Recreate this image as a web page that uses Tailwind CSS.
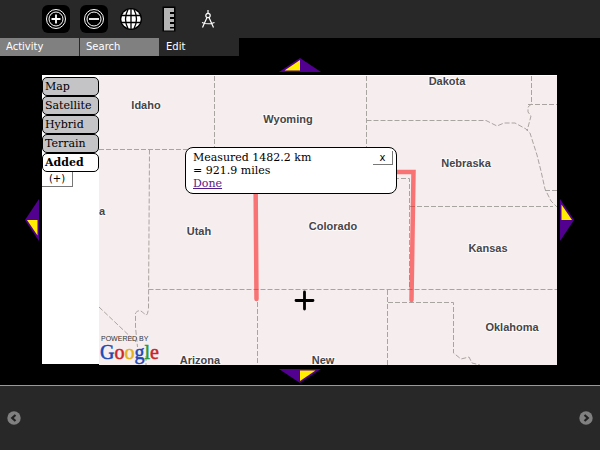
<!DOCTYPE html>
<html lang="en">
<head>
  <meta charset="UTF-8" />
  <meta name="viewport" content="width=device-width, initial-scale=1.0" />
  <title>Map Activity</title>
  <script src="https://cdn.jsdelivr.net/npm/@tailwindcss/browser@4"></script>
</head>

<body class="min-h-screen flex flex-col bg-black overflow-hidden font-['DejaVu_Sans',sans-serif]">

  <!-- Toolbar -->
  <header class="bg-[#282828]">
    <div class="flex items-center gap-2.5 h-[38px] pl-[42px]">
      <button type="button" aria-label="Zoom in" class="w-7 h-7 rounded-md bg-black">
        <svg viewBox="0 0 28 28" fill="none" stroke="#fff">
          <circle cx="14" cy="14" r="9.5" stroke-width="1" />
          <circle cx="14" cy="14" r="7" stroke-width="1" />
          <path d="M9.5 14h9M14 9.5v9" stroke-width="1.8" />
        </svg>
      </button>
      <button type="button" aria-label="Zoom out" class="w-7 h-7 rounded-md bg-black">
        <svg viewBox="0 0 28 28" fill="none" stroke="#fff">
          <circle cx="14" cy="14" r="9.5" stroke-width="1" />
          <circle cx="14" cy="14" r="7" stroke-width="1" />
          <path d="M9 14h10" stroke-width="1.8" />
        </svg>
      </button>
      <button type="button" aria-label="Street view" class="w-7 h-7">
        <svg viewBox="0 0 28 28">
          <circle cx="13" cy="14" r="11" fill="#000" />
          <circle cx="13" cy="14" r="9.7" fill="#fff" />
          <path d="M13 4v20M3 10.5h20M3 17.500h20M10 4.500q-5 9.500 0 19M16 4.500q5 9.500 0 19" fill="none" stroke="#000" stroke-width="1.300" />
        </svg>
      </button>
      <button type="button" aria-label="Measure" class="w-7 h-7">
        <svg viewBox="0 0 28 28">
          <path d="M6.500 1.500h13v25h-13z" fill="#000" />
          <path d="M8 3h10v4h-4v2h4v3h-4v2h4v3h-4v2h4v3h-4v1.500h4v2H8z" fill="#b4b4b4" />
        </svg>
      </button>
      <button type="button" aria-label="Draw" class="w-7 h-7">
        <svg viewBox="0 0 28 28" fill="none" stroke="#fff" stroke-width="1.200">
          <circle cx="14" cy="10.500" r="2.200" />
          <path d="M14 5v3.500M13 12.500L8.500 22.500M15 12.500L19.500 22.500M8 17.500q6 2.500 12.500 0" />
        </svg>
      </button>
    </div>
    <nav class="flex h-[18px] bg-black text-[10px] leading-[17px] text-white">
      <a href="#activity" class="w-20 pl-1.5 bg-[#808080] border-r border-[#282828]">Activity</a>
      <a href="#search" class="w-20 pl-1.5 bg-[#808080] border-r border-[#282828]">Search</a>
      <a href="#edit" class="w-20 pl-1.5 bg-[#282828] border-r border-black">Edit</a>
    </nav>
  </header>

  <!-- Map with pan arrows on each side -->
  <main class="flex-1 grid grid-cols-[42px_1fr_43px] grid-rows-[19px_1fr_20px]">
    <button type="button" aria-label="Pan north" class="col-start-2 justify-self-center self-end mb-[3px]">
      <svg width="42" height="14" viewBox="0 0 42 14">
        <path d="M0 14L21 0L42 14z" fill="#52008f" />
        <path d="M5.500 12.500L21 2v10.500z" fill="#fe0" />
      </svg>
    </button>
    <button type="button" aria-label="Pan west" class="col-start-1 row-start-2 justify-self-end self-center mr-[3px]">
      <svg width="14" height="42" viewBox="0 0 14 42">
        <path d="M14 0L0 21L14 42z" fill="#52008f" />
        <path d="M12.500 36.500L2 21h10.500z" fill="#fe0" />
      </svg>
    </button>

    <section class="col-start-2 row-start-2 relative flex overflow-hidden border-t border-white bg-white">
      <div class="w-[57px] pt-px border-b border-black flex flex-col items-start font-['DejaVu_Serif',serif] text-[11px] leading-[17px]">
        <button type="button" class="w-full h-[19px] pl-0.5 text-left rounded-[5px] border border-black bg-[#c4c3c6]">Map</button>
        <button type="button" class="w-full h-[19px] pl-0.5 text-left rounded-[5px] border border-black bg-[#c4c3c6]">Satellite</button>
        <button type="button" class="w-full h-[19px] pl-0.5 text-left rounded-[5px] border border-black bg-[#c4c3c6]">Hybrid</button>
        <button type="button" class="w-full h-[19px] pl-0.5 text-left rounded-[5px] border border-black bg-[#c4c3c6]">Terrain</button>
        <button type="button" class="w-full h-[19px] pl-0.5 text-left rounded-[5px] border border-black bg-white font-bold">Added</button>
        <button type="button" class="w-[31px] h-[15px] border-r border-b border-[#777] font-['DejaVu_Sans',sans-serif] text-[10px] leading-[14px]">(+)</button>
      </div>

      <div class="relative flex-1 min-w-0 bg-[#f6eeee]">
        <svg class="absolute inset-0 w-full h-full" viewBox="99 76 458 289" preserveAspectRatio="xMidYMid slice">
          <!-- State borders -->
          <g fill="none" stroke="#a9a4a1" stroke-width="1" stroke-dasharray="5 2">
            <path d="M214.500 76v72.500M99 149.500h120M149.500 149.500L148.500 308q-1 10-4 6q-5-6-9-1V327l2 20" />
            <path d="M148.500 289.500H557M257.500 302v63M99 307L136 342M146 356v9" />
            <path d="M366.500 76v72M366.500 120.500H486L497 126L504 123H515L526 129L530 133L537 155L541 171L545 189L551 201L557 207" />
            <path d="M531.500 76V104L528 107V112L531 116L527 131M528 104.500H557M545 190.500H557" />
            <path d="M366 178.500H409.500V289.500M410 206.500H553M387.500 290V365M388 302.500H453.500V353L461 359L469 357L472 363L480 365" />
          </g>
          <!-- Measured route -->
          <path d="M256.500 299L255.500 172H413.500L411.500 300" fill="none" stroke="#fa2222" stroke-opacity="0.6" stroke-width="4.500" stroke-linecap="round" />
          <path d="M304.500 292v17M296 300.500h17" stroke="#000" stroke-width="2.800" stroke-linecap="round" />
          <g class="font-['Liberation_Sans',sans-serif] text-[11px] font-bold" fill="#474549" stroke="#fff" stroke-opacity="0.700" stroke-width="2" paint-order="stroke" text-anchor="middle">
            <text x="146" y="109">Idaho</text>
            <text x="288" y="123">Wyoming</text>
            <text x="447" y="85">Dakota</text>
            <text x="466" y="167">Nebraska</text>
            <text x="102" y="215">a</text>
            <text x="199" y="235">Utah</text>
            <text x="333" y="230">Colorado</text>
            <text x="488" y="252">Kansas</text>
            <text x="512" y="331">Oklahoma</text>
            <text x="200" y="364">Arizona</text>
            <text x="323" y="364">New</text>
          </g>
          <text x="101" y="341" class="font-['Liberation_Sans',sans-serif] text-[7px]" fill="#333">POWERED BY</text>
          <text x="100" y="359" class="font-['Liberation_Serif',serif] text-[20px]" stroke-width="0.500"><tspan fill="#1d48b5" stroke="#1d48b5">G</tspan><tspan fill="#c9252b" stroke="#c9252b">o</tspan><tspan fill="#e3b21a" stroke="#e3b21a">o</tspan><tspan fill="#1d48b5" stroke="#1d48b5">g</tspan><tspan fill="#229a3d" stroke="#229a3d">l</tspan><tspan fill="#c9252b" stroke="#c9252b">e</tspan></text>
        </svg>

        <!-- Measure result -->
        <div class="absolute left-[86px] top-[71px] w-[212px] h-[47px] pl-[7px] pt-[3px] rounded-lg border border-black bg-white font-['DejaVu_Serif',serif] text-[11px] leading-[13px]">
          <button type="button" aria-label="Close" class="float-right w-5 h-3.5 mr-[3px] border-r border-b border-[#777] font-['DejaVu_Sans',sans-serif] text-[10px]">x</button>
          <p>Measured 1482.2 km</p>
          <p>= 921.9 miles</p>
          <a href="#done" class="underline text-[#551a8b]">Done</a>
        </div>
      </div>
    </section>

    <button type="button" aria-label="Pan east" class="col-start-3 row-start-2 justify-self-start self-center ml-[3px]">
      <svg width="14" height="42" viewBox="0 0 14 42">
        <path d="M0 0L14 21L0 42z" fill="#52008f" />
        <path d="M1.500 5.500L12 21H1.500z" fill="#fe0" />
      </svg>
    </button>
    <button type="button" aria-label="Pan south" class="col-start-2 row-start-3 justify-self-center self-start mt-1">
      <svg width="42" height="14" viewBox="0 0 42 14">
        <path d="M0 0L21 14L42 0z" fill="#52008f" />
        <path d="M36.500 1.500L21 12V1.500z" fill="#fe0" />
      </svg>
    </button>
  </main>

  <!-- Tray -->
  <footer class="flex items-center justify-between h-[65px] px-[7px] border-t border-[#999] bg-[#282828]">
    <button type="button" aria-label="Previous">
      <svg width="14" height="14" viewBox="0 0 14 14">
        <circle cx="7" cy="7" r="6.700" fill="#808080" />
        <path d="M8.500 4L5.200 7L8.500 10" fill="none" stroke="#222" stroke-width="2.200" />
      </svg>
    </button>
    <button type="button" aria-label="Next">
      <svg width="14" height="14" viewBox="0 0 14 14">
        <circle cx="7" cy="7" r="6.700" fill="#808080" />
        <path d="M5.500 4L8.800 7L5.500 10" fill="none" stroke="#222" stroke-width="2.200" />
      </svg>
    </button>
  </footer>

</body>
</html>
